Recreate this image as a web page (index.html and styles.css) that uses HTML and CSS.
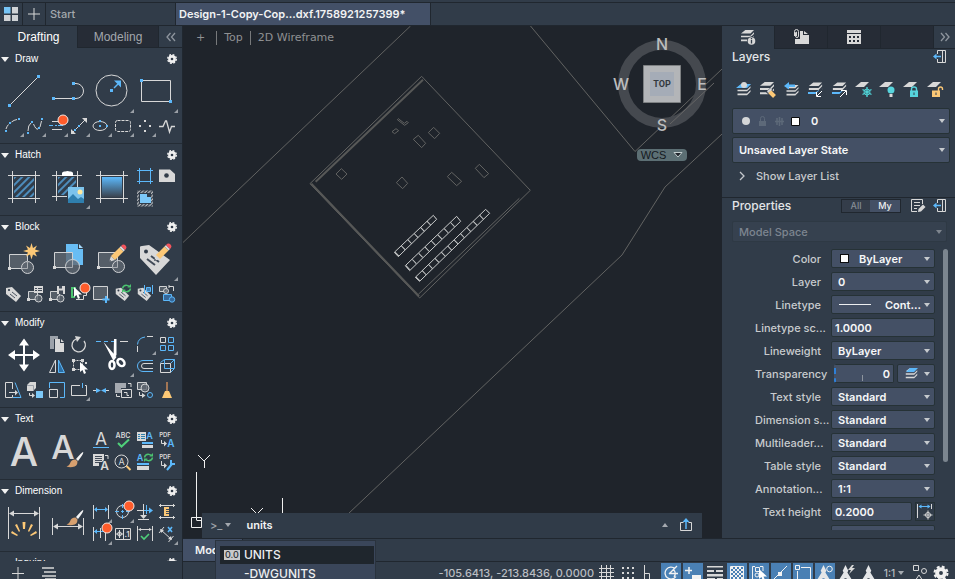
FILE: index.html
```
<!DOCTYPE html>
<html lang="en">
<head>
<meta charset="utf-8">
<title>Design-1-Copy</title>
<link rel="stylesheet" href="styles.css">
</head>
<body>
<svg class="defs" width="0" height="0" aria-hidden="true">
  <defs>
    <linearGradient id="fade" x1="0" y1="0" x2="0" y2="1"><stop offset="0" stop-color="#5cb8fa"/><stop offset="1" stop-color="#3a434f"/></linearGradient>
    <pattern id="hatch" width="5" height="5" patternUnits="userSpaceOnUse" patternTransform="rotate(45)"><path d="M2 0V5" stroke="#5cb8fa" stroke-width="1.3"/></pattern>
    <pattern id="fine" width="2.5" height="2.5" patternUnits="userSpaceOnUse" patternTransform="rotate(45)"><path d="M1 0V3" stroke="#d8d8d8"/></pattern>
    <symbol id="gear" viewBox="0 0 12 12"><circle cx="6" cy="6" r="3.900" fill="#f0f0f0"/><circle cx="6" cy="6" r="4.300" fill="none" stroke="#f0f0f0" stroke-width="1.400" stroke-dasharray="1.900 1.480"/><circle cx="6" cy="6" r="1.300" fill="#313c49"/></symbol>
    <symbol id="pencil" viewBox="0 0 18 18"><path d="M0 18l2-6 4 4z" fill="#d8d8d8"/><path d="M0 18l.8-2.300 1.500 1.500z" fill="#39424f"/><path d="M2 12L10.500 3.500l4 4L6 16z" fill="#fcc876"/><path d="M10.500 3.500l1.500-1.500 4 4-1.500 1.500z" fill="#d8d8d8"/><path d="M12 2q2.500-2.500 4.500-.5T16 6z" fill="#f5555d"/></symbol>
    <symbol id="brush" viewBox="0 0 18 16"><path d="M17 0q1.500 1-5 9l-2-2q6-7 7-7z" fill="#f4f4f4"/><path d="M9.500 7.500l2 2q0 5-5 5.500-3 .5-6-.5 3-1 3.500-3 1-4 5.500-4z" fill="#d7a06f"/></symbol>
    <symbol id="badge" viewBox="0 0 12 12"><circle cx="6" cy="6" r="5" fill="#ff5c2b" stroke="#f5e6e0"/></symbol>
    <symbol id="cursor" viewBox="0 0 9 12"><path d="M1 0v10l2.500-2 1.500 4 2-1-1.500-3.500H9z" fill="#fff"/></symbol>
    <symbol id="tag" viewBox="0 0 18 18"><path d="M2 3l6-1 9 9-5 6-10-8z" fill="#d8d8d8"/><circle cx="5" cy="5" r="1.100" fill="#313c49"/><path d="M6 9l5 4M8 7l5 4" stroke="#4a5461" fill="none"/></symbol>
    <symbol id="refresh" viewBox="0 0 12 10"><path d="M1.500 5q1-4 5-3.500l2.500 1M10.500 5q-1 4-5 3.500l-2.500-1" fill="none" stroke="#4bc26f" stroke-width="1.500"/><path d="M11 0v4H7zM1 10V6h4z" fill="#4bc26f"/></symbol>
    <symbol id="slabs" viewBox="0 0 17 15"><path d="M6 0h10l-4 4H1zM1 6.500h11l4-4v2l-4 4H1zM1 11h11l4-4v2l-4 4H1z" fill="#d8d8d8"/></symbol>
    <symbol id="dock" viewBox="0 0 14 14"><path d="M4.500 4V.5h8v12h-8V9M9.500 1v11" fill="none" stroke="#d8d8d8"/><path d="M8 6.500H2" stroke="#5cb8fa" stroke-width="1.500"/><path d="M0 6.500l3.500-3v6z" fill="#5cb8fa"/></symbol>
    <symbol id="person" viewBox="0 0 16 18"><path d="M8 0l3 6-1 2 5 8q-3 2-5 1l-1-3H7l-1 3q-2 1-5-1l5-8-1-2z" fill="#e4e6e8"/></symbol>
  </defs>
</svg>

<div class="app">
  <div class="titlebar"></div>
  <nav class="docbar" aria-label="Documents">
    <button class="doc-home" aria-label="Home"><svg width="16" height="16"><path fill="#76c5f7" d="M1 1h6.500v6.500H1z"/><path fill="#d0d3d6" d="M9 1h6v6.500H9zM1 9h6.500v6H1zM9 9h6v6H9z"/></svg></button>
    <button class="doc-add" aria-label="New tab"><svg width="12" height="12"><path class="l" d="M6 0v12M0 6h12"/></svg></button>
    <button class="doc-tab start">Start</button>
    <button class="doc-tab current">Design-1-Copy-Cop...dxf.1758921257399*</button>
  </nav>

  <div class="workspace">
    <aside class="tools">
      <div class="tool-tabs">
        <button class="tool-tab on">Drafting</button>
        <button class="tool-tab modeling">Modeling</button>
        <button class="collapse" aria-label="Collapse"><svg width="10" height="8"><path class="dim" d="M4.500 0L1 4l3.500 4M9 0L5.500 4 9 8"/></svg></button>
      </div>
      <div class="sections">
        <section class="group">
          <h2>Draw <button class="opts" aria-label="Draw options"><svg width="12" height="12"><use href="#gear"/></svg></button></h2>
          <div class="grid">
            <button class="big" aria-label="Line"><svg width="44" height="44"><path class="l" d="M7.500 35.500l29-29"/><path class="bf" d="M6 34h3v3H6zM35 5h3v3h-3z"/></svg></button>
            <button class="big" aria-label="Polyline"><svg width="44" height="44"><path class="l" d="M7.500 28.500h20M29 13.500h1a7.500 7.500 0 0 1 0 15h-2"/><path class="bf" d="M6 27h3v3H6zM26 27h3v3h-3zM26 12h3v3h-3z"/></svg></button>
            <button class="big more" aria-label="Circle"><svg width="44" height="44"><circle class="l" cx="21.500" cy="20.500" r="15.500"/><path class="b" stroke-width="1.500" d="M24 18l4-4"/><path class="bf" d="M20 19h3v3h-3zM31 10.500v7l-7-7z"/></svg></button>
            <button class="big more" aria-label="Rectangle"><svg width="44" height="44"><path class="l" d="M7.500 10.500h29v21h-29z"/><path class="bf" d="M6 9h3v3H6zM35 30h3v3h-3z"/></svg></button>
          </div>
          <div class="grid second">
            <button class="more" aria-label="Arc"><svg width="22" height="22"><path class="l" d="M4 13Q5 10 6.500 8.500M9.500 6Q12 4 15 3.500"/><path class="bf" d="M3 14h2v2H3zM7 6h2v2H7zM16 2h2v2h-2z"/></svg></button>
            <button class="more" aria-label="Spline"><svg width="22" height="22"><path class="l" d="M4 15q0-6 3-8M9.500 8Q12 14 14 13M16 11l1.500-6"/><path class="bf" d="M3 16h2v2H3zM7 5h2v2H7zM14 11h2v2h-2zM17 2h2v2h-2z"/></svg></button>
            <button class="more" aria-label="Multiline"><svg width="22" height="22"><path class="l" d="M6 5.500h10M6 13.500h10"/><path class="b" d="M3 9.500h4m2 0h2m1 0h5"/><use href="#badge" x="11" y="-2" width="12" height="12"/></svg></button>
            <button class="more" aria-label="Construction line"><svg width="22" height="22"><path class="l" d="M5 16L17 4"/><path class="lf" d="M3 18v-5l5 5zM19 2v5l-5-5z"/><path class="bf" d="M10 9h2v2h-2zM6 13h2v2H6z"/></svg></button>
            <button class="more" aria-label="Ellipse"><svg width="22" height="22"><ellipse class="l" cx="10" cy="10" rx="7" ry="4.500"/><path class="bf" d="M9 9h2v2H9zM9 4h2v2H9zM16 9h2v2h-2z"/></svg></button>
            <button class="more" aria-label="Revision cloud"><svg width="22" height="22"><rect class="l" x="3.500" y="4.500" width="15" height="11" rx="2" stroke-dasharray="3 1"/></svg></button>
            <button class="more" aria-label="Point"><svg width="22" height="22"><path class="lf" d="M10 4h2v2h-2zM5 9h2v2H5zM15 9h2v2h-2zM10 14h2v2h-2z"/></svg></button>
            <button aria-label="Break line"><svg width="22" height="22"><path class="l" stroke-width="1.300" d="M3 10.500h4l2.500-5.500h1l3 11 2-5.500H19"/></svg></button>
          </div>
        </section>

        <section class="group">
          <h2>Hatch <button class="opts" aria-label="Hatch options"><svg width="12" height="12"><use href="#gear"/></svg></button></h2>
          <div class="grid">
            <button class="big" aria-label="Hatch"><svg width="44" height="44"><path fill="url(#hatch)" d="M12 11h20v20H12z"/><path class="l" d="M10.500 5v32M33.500 5v32M6 9.500h32M6 32.500h32"/></svg></button>
            <button class="big more" aria-label="Image hatch"><svg width="44" height="44"><path fill="url(#hatch)" d="M12 11h18v18H12z"/><path class="l" d="M10.500 5v30M31.500 5v16M6 9.500h30M6 30.500h15"/><path fill="#fff" d="M16 7q0-1 2-1.500h1q2.500-1 5 0h1q2 .5 2 1.500v3H16z"/><path fill="#7cc3ec" d="M22 21h16v16H22z"/><circle cx="34" cy="26" r="2.500" fill="#ffeaa0"/><path fill="#2f7fae" d="M22 33l5-5 5 5 3-2 3 2v4H22z"/></svg></button>
            <button class="big" aria-label="Gradient"><svg width="44" height="44"><path fill="url(#fade)" d="M12 11h20v20H12z"/><path class="l" d="M10.500 5v32M33.500 5v32M6 9.500h32M6 32.500h32"/></svg></button>
            <button aria-label="Boundary"><svg width="22" height="22"><path class="b" d="M5.500 2v16M16.500 2v16M3 4.500h16M3 15.500h16"/></svg></button>
            <button aria-label="Wipeout"><svg width="22" height="22"><path class="lf" d="M3 3.500h11l5 4.500v8H3z"/><circle cx="10.500" cy="9.500" r="2.300" fill="#313c49"/></svg></button>
            <button aria-label="Region"><svg width="22" height="22"><path fill="url(#fine)" d="M3 2.500h16v16H3z"/><path fill="#313c49" d="M5 5h12v11H5z"/><path fill="#7cc8f8" d="M6 6h7v3h4v6H6z"/></svg></button>
          </div>
        </section>

        <section class="group">
          <h2>Block <button class="opts" aria-label="Block options"><svg width="12" height="12"><use href="#gear"/></svg></button></h2>
          <div class="grid">
            <button class="big" aria-label="Create block"><svg width="44" height="44"><path class="box" d="M7.500 16.500h18v14h-18z"/><circle class="box" cx="25.500" cy="29.500" r="6"/><path class="box-line" d="M25.500 23v7.500h-6"/><path class="lf" d="M6 29h3v3H6z"/><path fill="#fcc876" d="M29.500 5l1.500 5 4-2.500-2 4 5 1.500-5 1.500 2 4-4-2-1.500 5-1.500-5-4 2 2-4-5-1.500 5-1.500-2-4 4 2.500z"/></svg></button>
            <button class="big" aria-label="Insert block"><svg width="44" height="44"><path fill="#68bdf4" d="M20 6h12v5h5v16H20z"/><path fill="#a6dafb" d="M33 6l4 4h-4z"/><path class="box" d="M8.500 14.500h18v15h-18z"/><circle class="box" cx="26.500" cy="28.500" r="7"/><path class="box-line" d="M26.500 22v7.500H20"/><path class="lf" d="M7 28h3v3H7z"/></svg></button>
            <button class="big" aria-label="Edit block"><svg width="44" height="44"><path class="box" d="M8.500 14.500h19v15h-19z"/><circle class="box" cx="28.500" cy="28.500" r="6"/><path class="box-line" d="M27.500 23v6.500H22"/><path class="lf" d="M7 28h3v3H7z"/><use href="#pencil" x="19" y="6" width="18" height="18"/></svg></button>
            <button class="big more" aria-label="Edit attributes"><svg width="44" height="44"><path class="lf" d="M6 9q0-1 2-1l7-1 21 15-14 15L6 20z"/><circle cx="12" cy="13.500" r="2" fill="#313c49"/><path stroke="#414a57" fill="none" stroke-width="2" d="M13 21l8 6M17 18l8 6"/><use href="#pencil" x="20" y="5" width="18" height="18"/></svg></button>
          </div>
          <div class="grid second">
            <button aria-label="Define attribute"><svg width="22" height="22"><use href="#tag" x="2" y="1" width="18" height="18"/></svg></button>
            <button aria-label="Block list"><svg width="22" height="22"><path class="box" d="M4.500 7.500h9v8h-9z"/><circle class="box" cx="14.500" cy="14.500" r="3.500"/><path class="lf" d="M10 2h9v7h-9z"/><path stroke="#414a57" d="M11 4.500h2m1 0h4m-7 2h2m1 0h4"/><path class="lf" d="M3 14h3v3H3z"/></svg></button>
            <button aria-label="Write block"><svg width="22" height="22"><path class="box" d="M4.500 7.500h9v8h-9z"/><circle class="box" cx="14.500" cy="14.500" r="3.500"/><path class="lf" d="M11 2h8v8h-8zM3 14h3v3H3z"/><path fill="#414a57" d="M13 2h3v2.500h-3zM13 6.500h4V10h-4z"/></svg></button>
            <button aria-label="Base point"><svg width="22" height="22"><path fill="none" stroke="#4bc26f" stroke-width="2" d="M8 4H4v9h3"/><path class="l" d="M8 15.500h7.500v-4h3v-5"/><use href="#cursor" x="5" y="3" width="9" height="12"/><use href="#badge" x="11" y="-2" width="12" height="12"/></svg></button>
            <button aria-label="Add to block"><svg width="22" height="22"><path class="box" d="M3.500 2.500h14v13h-14z"/><path fill="none" stroke="#5cb8fa" stroke-width="2" d="M16 12v7M12.500 15.500h7"/></svg></button>
            <button aria-label="Sync attributes"><svg width="22" height="22"><use href="#tag" x="2" y="2" width="16" height="16"/><use href="#refresh" x="9" y="0" width="11" height="9"/></svg></button>
            <button aria-label="Attribute manager"><svg width="22" height="22"><use href="#tag" x="2" y="2" width="16" height="16"/><path fill="#3f7fb4" stroke="#5cb8fa" d="M12.500 3.500h4v4h-4z"/><path class="b" d="M10.500 1v9M18.500 1v9"/></svg></button>
            <button aria-label="Replace block"><svg width="22" height="22"><path class="box" d="M3.500 2.500h7v5h-7z"/><circle class="box" cx="10" cy="7" r="2.500"/><path class="l" d="M13 2.500h4.500V7M13 1v3"/><path fill="#36689a" stroke="#5cb8fa" d="M7.500 10.500h8v6h-8z"/><circle cx="16" cy="15.500" r="2.700" fill="#36689a" stroke="#5cb8fa"/></svg></button>
          </div>
        </section>

        <section class="group">
          <h2>Modify <button class="opts" aria-label="Modify options"><svg width="12" height="12"><use href="#gear"/></svg></button></h2>
          <div class="grid modify">
            <button class="big" aria-label="Move"><svg width="44" height="44"><path stroke="#fff" stroke-width="2" d="M22 10v22M11 21h22"/><path fill="#fff" d="M22 4.500l5 7H17zM22 37.500l5-7H17zM6 21l7-5v10zM38 21l-7-5v10z"/></svg></button>
            <button aria-label="Copy"><svg width="22" height="22"><path fill="#9ca2aa" d="M4 2h8v3H8v10H4z"/><path class="lf" d="M9 5h5v4h4v9H9zM15 5l3 3h-3z"/></svg></button>
            <button aria-label="Rotate"><svg width="22" height="22"><path class="l" stroke-width="1.300" d="M8 5a6.700 6.700 0 1 0 8 2"/><path class="lf" d="M7 2l6 1-4 5z"/></svg></button>
            <button class="big more" aria-label="Trim"><svg width="44" height="44"><path class="b" d="M6 7.500h5m3 0h4m3 0h4"/><path class="l" d="M30 7.500h8"/><path fill="#fff" d="M13.500 8l13 15-3 4zM24 5h2.500v16l-3 4z"/><g fill="none" stroke="#fff" stroke-width="2.500"><ellipse cx="22" cy="31" rx="2.500" ry="4"/><ellipse cx="31" cy="28.500" rx="3" ry="4" transform="rotate(-45 31 28.500)"/></g></svg></button>
            <button class="more" aria-label="Fillet"><svg width="22" height="22"><path class="b" d="M3.500 10.500Q4 4 11 3"/><path class="l" d="M3.500 12v6M13 2.500h6"/></svg></button>
            <button class="more" aria-label="Array"><svg width="22" height="22"><path class="l" d="M4.500 3.500h5v5h-5z"/><path class="b" d="M12.500 3.500h5v5h-5zM4.500 11.500h5v5h-5zM12.500 11.500h5v5h-5z"/></svg></button>
            <button aria-label="Mirror"><svg width="22" height="22"><path class="l" d="M9.500 4v12.500h-6z"/><path fill="#2d6ea3" stroke="#5cb8fa" d="M12.500 4v12.500h6z"/></svg></button>
            <button aria-label="Select"><svg width="22" height="22"><path class="l" stroke-dasharray="2 1" d="M5.500 4.500h9v9h-9z"/><path class="lf" d="M4 3h3v3H4zM13 3h3v3h-3zM4 12h3v3H4zM17 6h2v2h-2z"/><use href="#cursor" x="11" y="6" width="9" height="12"/></svg></button>
            <button aria-label="Offset"><svg width="22" height="22"><path class="b" d="M19 4.500H9a5.500 5.500 0 0 0 0 11h10"/><path class="l" d="M19 7.500h-9a2.500 2.500 0 0 0 0 5h9"/></svg></button>
            <button aria-label="Box edges"><svg width="22" height="22"><path class="b" d="M4.500 6.500l4-3h10l-4 4M18.500 3.500v9l-4 4"/><path class="l" d="M4.500 7.500h10v9h-10z"/><path class="b" d="M8.500 4v8.500H18"/></svg></button>
          </div>
          <div class="grid second">
            <button aria-label="Stretch"><svg width="22" height="22"><path class="l" d="M10.500 9V2.500h-7v15h7V15"/><path class="b" d="M13 2.500l6 15h-8"/><path class="l" d="M7 12.500h7"/><path class="lf" d="M13 10l3 2.500-3 3z"/></svg></button>
            <button aria-label="Copy solid"><svg width="22" height="22"><path class="lf" d="M3 5l3-3h6v6l-3 3H3z"/><path stroke="#9ca2aa" fill="none" d="M3 5.500h6.500V11"/><path fill="#7cc8f8" d="M12 11h7v7h-7z"/><path class="l" d="M5.500 13v2.500H9"/><path class="lf" d="M8 13l3 2.500L8 18z"/></svg></button>
            <button aria-label="Scale"><svg width="22" height="22"><path class="b" d="M3.500 8V2.500h15v15H14"/><path class="l" d="M3.500 9.500h8v8h-8z"/></svg></button>
            <button class="more" aria-label="Break"><svg width="22" height="22"><path class="l" d="M12 5.500H3.500v10h15v-10H17"/><path class="b" d="M14.500 3v5"/></svg></button>
            <button aria-label="Join"><svg width="22" height="22"><path class="l" d="M3 10.500h5M14 10.500h5"/><path class="bf" d="M6 8l5 2.500L6 13zM16 8l-5 2.500 5 2.500z"/></svg></button>
            <button aria-label="Draw order"><svg width="22" height="22"><path fill="#a4a9b0" d="M3 3h11v5H9v5H3z"/><path class="l" d="M9.500 9.500h10v8h-10zM12 12.500h3v3h2M16 3.500h3V7M4.500 14v2.500H8"/></svg></button>
            <button aria-label="Convert to block"><svg width="22" height="22"><path class="box" d="M3.500 2.500h9v7h-9z"/><circle class="box" cx="11" cy="8" r="4"/><circle class="b" cx="16" cy="15" r="2.500"/><path class="l" d="M5.500 12v3.500H9"/><path class="lf" d="M8 13l3.500 2.500L8 18z"/></svg></button>
            <button aria-label="Purge"><svg width="22" height="22"><path stroke="#e0955c" stroke-width="1.300" d="M11 2v10"/><path fill="#fcc876" d="M9 11h4l3 7H6z"/></svg></button>
          </div>
        </section>

        <section class="group">
          <h2>Text <button class="opts" aria-label="Text options"><svg width="12" height="12"><use href="#gear"/></svg></button></h2>
          <div class="grid">
            <button class="big" aria-label="Multiline text"><svg width="44" height="44"><text class="glyph medium" x="22" y="36" font-size="40">A</text></svg></button>
            <button class="big" aria-label="Text style"><svg width="44" height="44"><text class="glyph medium" x="17" y="29" font-size="33">A</text><use href="#brush" x="20" y="22" width="18" height="16"/></svg></button>
            <button aria-label="Single line text"><svg width="22" height="22"><text class="glyph thin" x="11" y="15" font-size="17">A</text><path class="b" d="M3 17.500h16"/></svg></button>
            <button aria-label="Spell check"><svg width="22" height="22"><text class="glyph" x="11" y="8" font-size="7">ABC</text><path fill="none" stroke="#4fd07a" stroke-width="2" d="M6 13l3.500 3.500L17 9.500"/></svg></button>
            <button aria-label="Field"><svg width="22" height="22"><path class="lf" d="M3 2h9v9H3z"/><path stroke="#2f7fae" d="M4 4.500h2m1 0h4M4 6.500h2m1 0h4M4 8.500h2m1 0h4"/><text class="glyph blue" x="15.500" y="9" font-size="9">A</text><path class="bf" d="M8 12h11v2H8z"/><path class="lf" d="M8 15h11v3H8z"/></svg></button>
            <button aria-label="PDF text"><svg width="22" height="22"><text class="glyph" x="9" y="7" font-size="6">PDF</text><path class="l" d="M5.500 10v3.500H9"/><path class="lf" d="M8 11l3 2.500-3 3z"/><text class="glyph blue" x="15" y="17" font-size="10">A</text></svg></button>
            <button aria-label="Text align"><svg width="22" height="22"><path class="lf" d="M3 2h11v12H3z"/><path stroke="#414a57" d="M5 4.500h7M5 6.500h7M5 8.500h7M5 10.500h4"/><path class="l" d="M15 3.500h3V7"/><path fill="#313c49" d="M9 10h3l2-2 5 10H9z"/><text class="glyph" x="14.500" y="18" font-size="12">A</text></svg></button>
            <button aria-label="Find text"><svg width="22" height="22"><circle class="l" cx="9.500" cy="9.500" r="6.500"/><text class="glyph thin" x="9.500" y="13" font-size="9">A</text><path stroke="#fcc876" stroke-width="2" d="M14.500 14l4 4"/></svg></button>
            <button aria-label="Update text"><svg width="22" height="22"><text class="glyph blue" x="6" y="9" font-size="9">A</text><use href="#refresh" x="9" y="1" width="11" height="9"/><path class="bf" d="M3 11h12v2H3z"/><path class="lf" d="M3 14h12v4H3z"/></svg></button>
            <button aria-label="PDF settings"><svg width="22" height="22"><text class="glyph" x="9" y="7" font-size="6">PDF</text><path class="l" d="M5.500 9v4.500H9"/><path class="lf" d="M8 11l3 2.500-3 3z"/><path fill="none" stroke="#5cb8fa" stroke-width="2" d="M11 18l5-6M15 8v4h4"/></svg></button>
          </div>
        </section>

        <section class="group">
          <h2>Dimension <button class="opts" aria-label="Dimension options"><svg width="12" height="12"><use href="#gear"/></svg></button></h2>
          <div class="grid">
            <button class="big" aria-label="Dimension"><svg width="44" height="44"><path class="l" d="M6.500 5v32M37.500 5v32M8 11.500h28"/><path class="lf" d="M7 11.500l5-3v6zM37 11.500l-5-3v6z"/><path fill="#fcc876" d="M20.500 20h3l-.5 7h-2zM13 23l2-1 3 7-1 1zM31 23l-2-1-3 7 1 1zM9 31l1-2 6 4-1 1zM35 31l-1-2-6 4 1 1z"/></svg></button>
            <button class="big" aria-label="Dimension style"><svg width="44" height="44"><path class="l" d="M6.500 16v17M37.500 16v17M8 24.500h28"/><path class="lf" d="M7 24.500l5-3v6zM37 24.500l-5-3v6z"/><use href="#brush" x="20" y="8" width="18" height="16"/></svg></button>
            <button class="more" aria-label="Linear"><svg width="22" height="22"><path class="l" d="M3.500 3v14M18.500 3v14"/><path class="b" d="M5 7.500h12"/><path class="bf" d="M4 7.500L7 5v5zM18 7.500L15 5v5z"/></svg></button>
            <button class="more" aria-label="Center mark"><svg width="22" height="22"><circle class="l" cx="10.500" cy="9.500" r="6"/><path class="b" d="M10.500 2v4m0 2v3m0 2v4M3 9.500h4m2 0h3m2 0h4"/><use href="#badge" x="11" y="-2" width="12" height="12"/></svg></button>
            <button aria-label="Ordinate"><svg width="22" height="22"><path class="l" d="M3 8.500h7M9.500 2v12"/><path class="b" d="M12.500 3v9M10 8.500h6"/><path class="bf" d="M19 8.500l-4-3v6z"/><path class="lf" d="M9.500 17l-3.500-4h7z"/><path class="l" d="M4 17.500h11"/></svg></button>
            <button aria-label="Dimension space"><svg width="22" height="22"><path class="l" d="M3 3.500h16M3 15.500h16M4.500 2v3M17.500 2v3M4.500 14v3M17.500 14v3"/><path fill="#fcc876" d="M8 5h5v9H8z"/><path stroke="#414a57" d="M10 7.500h3M10 9.500h3M10 11.500h3"/></svg></button>
            <button class="more" aria-label="Continue"><svg width="22" height="22"><path class="l" d="M3.500 3v14M10.500 4v10M15.500 4v13"/><path class="b" d="M4 7.500h6M11 7.500h4"/><path class="bf" d="M4 7.500L7 5v5z"/><use href="#badge" x="11" y="-2" width="12" height="12"/></svg></button>
            <button aria-label="Tolerance"><svg width="22" height="22"><path class="l" d="M3.500 4.500h15v11h-15zM11.500 4v12"/><circle class="l" cx="7.500" cy="10" r="2"/><path class="l" d="M7.500 6v8M4 10h7"/><text class="glyph" x="15" y="13" font-size="8">.1</text></svg></button>
            <button aria-label="Inspect"><svg width="22" height="22"><path class="l" d="M3.500 2v15M18.500 2v15M5 5.500h12"/><path class="lf" d="M4 5.500L7 4v3zM18 5.500L15 4v3z"/><path fill="none" stroke="#4fd07a" stroke-width="1.600" d="M7 12l3 3 5-5"/></svg></button>
            <button class="more" aria-label="Jog"><svg width="22" height="22"><path class="l" d="M5 6l10 9M3 9l5-6M12.500 18l5-6"/><path class="lf" d="M4 5l4 1-3 3zM16 16l-4-1 3-3z"/><path fill="none" stroke="#5cb8fa" stroke-width="1.600" d="M12 3l4 5M16 3l-4 5"/></svg></button>
          </div>
        </section>

        <section class="group">
          <h2>Inquiry <button class="opts" aria-label="Inquiry options"><svg width="12" height="12"><use href="#gear"/></svg></button></h2>
        </section>
      </div>
      <footer class="tools-foot">
        <button aria-label="Add group"><svg width="12" height="14"><path class="l" d="M6 1v12M0 7.500h12"/></svg></button>
        <button aria-label="Manage groups"><svg width="16" height="14"><path class="l" stroke-width="1.500" d="M1 2h12M3 6h12M1 10h14M4 13h11"/></svg></button>
      </footer>
    </aside>

    <div class="center">
      <div class="stage">
        <main class="canvas">
          <svg class="drawing" width="100%" height="100%" aria-label="Site plan drawing">
            <g class="plan" transform="translate(-183 -26)">
              <path d="M410.500 26L183 242.500M530.500 26l104.500 125.500L722 69M722 134l-57 53-43 68L348 514"/>
            </g>
            <g class="plan" transform="translate(107 34) scale(.3333)">
              <path d="M395 49L721 391 389 714 60 371zM385 703L688 415"/>
              <path class="wall" d="M399 59L77 365M64 371l323 338"/>
              <path d="M154 326l17 16-16 16-17-16zM336 351l17 19-15 16-19-18zM485 337l30 27-15 13-28-27zM568 313l28 28-14 12-26-28zM431 202l18 18-15 16-19-18zM385 226l22 24-12 13-25-25zM318 206l8 6-12 9-8-6zM325 176l18 14 8-6 4 4-11 8-22-17z"/>
              <path class="stalls" d="M430 466l10 12-115 112-12-13zM500 469l12 15-153 148-13-15zM587 448l12 12-210 204-13-12z"/>
            </g>
            <g class="rungs" transform="translate(107 34) scale(.3333)">
              <path d="M435 472L319 584M506 476L352 625M593 454L382 658"/>
            </g>
          </svg>
          <div class="view-label">
            <button aria-label="Viewport controls">+</button><span class="bar"></span><button>Top</button><span class="bar"></span><button>2D Wireframe</button>
          </div>
          <div class="viewcube">
            <svg width="104" height="108" aria-label="View cube">
              <circle cx="52" cy="52" r="39" fill="none" stroke="#45494f" stroke-width="10"/>
              <path fill="#b3b5b8" stroke="#7e8183" d="M33.500 33.500h37v37h-37z"/><path fill="#a5acb7" d="M40 40h24v24H40z"/>
              <text x="52" y="55" class="face">TOP</text>
              <text x="52" y="18">N</text><text x="92" y="58">E</text><text x="52" y="99">S</text><text x="11" y="58">W</text>
              <path stroke="#666" d="M60 92l44-41"/>
            </svg>
            <button class="wcs">WCS <svg width="10" height="6"><path fill="#1f242b" stroke="#c4cfd0" d="M1 .5h8l-4 4.500z"/></svg></button>
          </div>
          <svg class="ucs" width="110" height="90" aria-label="UCS icon"><path d="M13.500 24v48M8.500 69.500h10v10h-10zM13.500 72.500h12M15 7l6 6 6-6M21.500 13v7M68 60l6 6 6-6M99.500 50v20"/></svg>
          <form class="command">
            <span class="prompt">&gt;_</span><span class="tri"></span>
            <input type="text" aria-label="Command" value="units">
            <span class="tri up"></span>
            <button type="button" aria-label="Share"><svg width="12" height="14"><path class="l" d="M3.500 4.500h-3v8h11v-8h-3"/><path class="b" stroke-width="1.500" d="M6 11V3"/><path class="bf" d="M6 0l3.500 4h-7z"/></svg></button>
          </form>
        </main>

        <aside class="side">
          <div class="side-tabs">
            <button class="on" aria-label="Layers"><svg width="18" height="16"><use href="#slabs" x="1" y="0" width="15" height="13"/><circle cx="12.500" cy="11" r="4.500" fill="#313c49"/><circle cx="12.500" cy="11" r="3.800" fill="#d8d8d8"/><path stroke="#313c49" stroke-width="1.300" d="M12.500 8v1.300M12.500 10v3.500"/></svg></button>
            <button aria-label="References"><svg width="18" height="16"><path class="lf" d="M8 2h3v4h6v9H3v-5h5zM12 2l4 3h-4z"/><path stroke="#d8d8d8" fill="none" d="M2.500 7V2.500q0-2 2-2t2 2V7q0 1.500-1.500 1.500T3.500 7V4q0-1 1-1v4"/></svg></button>
            <button aria-label="Calendar"><svg width="16" height="14"><path class="lf" d="M1 0h14v3H1zM1 4h14v10H1z"/><path fill="#262c36" d="M3 6h2v2H3zM7 6h2v2H7zM11 6h2v2h-2zM3 10h2v2H3zM7 10h2v2H7zM11 10h2v2h-2z"/></svg></button>
            <span class="gap"></span>
            <button class="expand" aria-label="Expand"><svg width="10" height="8"><path class="dim" d="M1 0l3.500 4L1 8M5.500 0L9 4 5.500 8"/></svg></button>
          </div>

          <section class="layers">
            <header><h2>Layers</h2><button aria-label="Dock layers"><svg width="14" height="14"><use href="#dock"/></svg></button></header>
            <div class="layer-tools">
              <button aria-label="Isolate"><svg width="24" height="24"><use href="#slabs" x="4" y="6" width="16" height="13"/><path fill="#5cb8fa" d="M9 6h10l-4 4H4z"/><circle cx="12" cy="7" r="3" fill="#d8d8d8"/></svg></button>
              <button aria-label="Match"><svg width="24" height="24"><use href="#slabs" x="3" y="4" width="16" height="14"/><path stroke="#313c49" stroke-width="6" d="M12 12l6 6"/><path stroke="#fcc876" stroke-width="4" d="M13.500 13.500l5 5"/><path class="lf" d="M11 13l4-3 1 2-4 3z"/></svg></button>
              <button aria-label="Previous"><svg width="24" height="24"><use href="#slabs" x="5" y="7" width="15" height="12"/><path fill="#5cb8fa" d="M4 8l5-4v2.500h6V9H9v2.500z"/></svg></button>
              <button aria-label="Make current down"><svg width="24" height="24"><use href="#slabs" x="4" y="4" width="15" height="14"/><path fill="#5cb8fa" d="M4 14h8l3-2v2l-3 2H4z"/><path stroke="#313c49" stroke-width="5" d="M19 12l-6 6"/><path stroke="#fff" fill="none" d="M18 13l-5 5M12.500 14v4.500H17"/></svg></button>
              <button aria-label="Make current up"><svg width="24" height="24"><use href="#slabs" x="4" y="4" width="15" height="14"/><path fill="#5cb8fa" d="M4 14h8l3-2v2l-3 2H4z"/><path stroke="#313c49" stroke-width="5" d="M19 12l-6 6"/><path stroke="#fff" fill="none" d="M12 19l6-6M13 12.500h5.500V17"/></svg></button>
              <button aria-label="Freeze"><svg width="24" height="24"><path class="lf" d="M9 4h8l-5 5H3z"/><path fill="none" stroke="#4fd0d4" stroke-width="1.400" d="M15 9v10M10.500 11.500l9 5M10.500 16.500l9-5"/><circle cx="15" cy="14" r="3" fill="none" stroke="#4fd0d4"/></svg></button>
              <button aria-label="Turn off"><svg width="24" height="24"><path class="lf" d="M9 4h8l-5 5H3z"/><circle cx="15" cy="12" r="3.500" fill="#56d4dc"/><path class="lf" d="M13.500 16h3v3h-3z"/></svg></button>
              <button aria-label="Lock"><svg width="24" height="24"><path class="lf" d="M9 4h8l-5 5H3z"/><path fill="none" stroke="#56d4dc" stroke-width="1.400" d="M11.500 13v-2q0-2 2.500-2t2.500 2v2"/><path fill="#56d4dc" d="M10 12.500h8V19h-8z"/><path stroke="#313c49" d="M14 14.500v2.500"/></svg></button>
              <button aria-label="Unlock"><svg width="24" height="24"><path class="lf" d="M9 4h8l-5 5H3z"/><path fill="none" stroke="#fcc876" stroke-width="1.400" d="M14.500 13v-2q0-2 2-2t2 2v1"/><path fill="#fcc876" d="M8 12.500h8V19H8z"/><path stroke="#313c49" d="M12 14.500v2.500"/></svg></button>
            </div>
            <label class="field tall layer-field">
              <svg width="63" height="14"><circle cx="4" cy="7" r="4" fill="#d4d6d8"/><path fill="#5d6979" d="M17 7h7v5h-7z"/><path fill="none" stroke="#5d6979" d="M18.500 7V4.500q0-2 2-2t2 2V7"/><path stroke="#5d6979" stroke-width="1.500" d="M37.500 3v9M35 4v7M40 4v7M33 7.500h9"/><path fill="#fff" stroke="#0c0d0f" d="M49.500 3.500h8v8h-8z"/></svg>
              <select aria-label="Current layer"><option>0</option></select>
            </label>
            <label class="field tall"><select aria-label="Layer state"><option>Unsaved Layer State</option></select></label>
            <button class="show-list"><svg width="6" height="8"><path stroke="#c4c8cc" stroke-width="1.300" fill="none" d="M1 0l4 4-4 4"/></svg>Show Layer List</button>
          </section>

          <section class="props">
            <header><h2>Properties</h2>
              <div class="switch"><button>All</button><button class="on">My</button></div>
              <button aria-label="Edit properties"><svg width="16" height="14"><path class="l" d="M12.500 5V.500h-11v12H7M4 3.500h6M4 6.500h6M4 9.500h3"/><path class="lf" d="M8 13l.5-3L13 5.500l2.500 2.500-4.500 4.500z"/></svg></button>
              <button aria-label="Dock properties"><svg width="14" height="14"><use href="#dock"/></svg></button>
            </header>
            <label class="field space"><select aria-label="Selection" disabled><option>Model Space</option></select></label>
            <div class="scroll">
              <div class="rows">
                <label for="p1">Color</label><div class="field"><i class="swatch"></i><select id="p1"><option>ByLayer</option></select></div>
                <label for="p2">Layer</label><div class="field"><select id="p2"><option>0</option></select></div>
                <label for="p3">Linetype</label><div class="field"><i class="stroke"></i><select id="p3"><option>Cont...</option></select></div>
                <label for="p4">Linetype sc...</label><div class="field text"><input id="p4" type="text" value="1.0000"></div>
                <label for="p5">Lineweight</label><div class="field"><select id="p5"><option>ByLayer</option></select></div>
                <label for="p6">Transparency</label><div class="pair"><div class="field text range"><input id="p6" type="text" value="0"></div><button class="field by" aria-label="Transparency source"><svg width="13" height="12"><use href="#slabs" width="13" height="12"/><path fill="#5cb8fa" d="M5 0h8L9 4H1z"/></svg></button></div>
                <label for="p7">Text style</label><div class="field"><select id="p7"><option>Standard</option></select></div>
                <label for="p8">Dimension s...</label><div class="field"><select id="p8"><option>Standard</option></select></div>
                <label for="p9">Multileader...</label><div class="field"><select id="p9"><option>Standard</option></select></div>
                <label for="p10">Table style</label><div class="field"><select id="p10"><option>Standard</option></select></div>
                <label for="p11">Annotation...</label><div class="field"><select id="p11"><option>1:1</option></select></div>
                <label for="p12">Text height</label><div class="pair"><div class="field text"><input id="p12" type="text" value="0.2000"></div><button class="pick" aria-label="Pick height"><svg width="18" height="18"><path class="l" d="M1.500 1v14M15.500 1v5"/><path class="b" d="M3 3.500h11"/><path class="bf" d="M2.500 3.500l3-2v4zM14.500 3.500l-3-2v4z"/><circle class="l" cx="12" cy="12" r="2.500"/><path class="l" d="M12 7.500v9M7.500 12h9"/></svg></button></div>
                <span></span><div class="field"></div>
              </div>
              <div class="thumb"></div>
            </div>
          </section>
        </aside>
      </div>

      <nav class="layouts" aria-label="Layouts"><button class="on">Model</button></nav>
      <footer class="status">
        <span class="coords">-105.6413, -213.8436, 0.0000</span>
        <button aria-label="Grid"><svg width="20" height="20"><path class="l" d="M5.500 2v15M10.500 2v15M14.500 2v15M3 5.500h15M3 9.500h15M3 13.500h15"/></svg></button>
        <button aria-label="Snap"><svg width="20" height="20"><path fill="none" stroke="#d8d8d8" stroke-width="2" stroke-dasharray="2 3" d="M4 5h13M4 10h13M4 15h13"/></svg></button>
        <button class="slim" aria-label="Ortho"><svg width="12" height="20"><path class="l" d="M3.500 2v16M3.500 10.500h5V18"/></svg></button>
        <button class="on" aria-label="Polar tracking"><svg width="20" height="20"><path stroke="#f2f2f2" stroke-width="1.300" fill="none" d="M14 5.500A6 6 0 1 0 15 13.500M8 10.500h9M8 11l8-8M12 6q4 4 1 8"/></svg></button>
        <button class="on" aria-label="Dynamic input"><svg width="20" height="20"><path stroke="#f2f2f2" stroke-width="1.500" d="M6 4v7M2 7.500h7"/><path fill="#f2f2f2" d="M9 12h9v6H9z"/></svg></button>
        <button aria-label="Lineweight"><svg width="20" height="20"><path fill="#d8d8d8" d="M2 3h16v1.500H2zM2 7h7v2H2zM11 7h7v2h-7zM2 11h16v2.500H2zM2 15h8v3H2zM12 15h6v3h-6z"/></svg></button>
        <button class="on" aria-label="Transparency"><svg width="20" height="20"><path stroke="#f2f2f2" fill="none" d="M3.500 3.500h13v13h-13z"/><path stroke="#f2f2f2" stroke-width="2" stroke-dasharray="2 2" d="M4 5h12M6 7h10M4 9h12M6 11h10M4 13h12M6 15h10"/></svg></button>
        <button class="on" aria-label="Selection cycling"><svg width="20" height="20"><path stroke="#f2f2f2" fill="none" d="M6 3.500H3.500v13H6M11 3.500h3V8M6.500 4.500h4v4h-4z"/><circle cx="8" cy="12" r="2" stroke="#f2f2f2" fill="none"/><use href="#cursor" x="9" y="6" width="9" height="12"/></svg></button>
        <button class="on" aria-label="Object tracking"><svg width="20" height="20"><path stroke="#f2f2f2" fill="none" d="M3 16L16 3M3 16.500h15"/><path fill="#f2f2f2" d="M7 9h4v4H7z"/></svg></button>
        <button class="on" aria-label="Object snap"><svg width="20" height="20"><path stroke="#f2f2f2" fill="none" d="M2.500 2.500h4v4h-4zM8 4.500h9.500V18M4.500 8v10"/></svg></button>
        <button class="on" aria-label="Annotation visibility"><svg width="20" height="20"><use href="#person" x="1" y="2" width="15" height="17"/><circle cx="14.500" cy="6" r="2.800" fill="#4a80b4" stroke="#f2f2f2"/></svg></button>
        <button aria-label="Auto scale"><svg width="20" height="20"><use href="#person" x="1" y="2" width="15" height="17"/><path class="lf" d="M15 2l-4 5h3l-2 4 6-6h-3l2-3z"/></svg></button>
        <button aria-label="Annotation scale"><svg width="20" height="20"><use href="#person" x="2" y="2" width="15" height="17"/></svg></button>
        <button class="scale">1:1 <span class="tri"></span></button>
        <button aria-label="Isolate objects"><svg width="20" height="20"><path class="l" d="M4.500 2.500h5v5h-5zM6 18l4-6 4 6z"/><circle class="l" cx="15" cy="8" r="2.500"/></svg></button>
        <button aria-label="Settings"><svg width="20" height="20"><use href="#gear" x="1" y="1" width="18" height="18"/></svg></button>
      </footer>
    </div>
  </div>

  <ul class="suggest">
    <li class="on"><span class="chip">0.0</span>UNITS</li>
    <li>-DWGUNITS</li>
  </ul>
</div>
</body>
</html>
```

FILE: styles.css
```
:root {
  --panel: #313c49;
  --line: #20272f;
  --field: #445065;
  --edge: #263236;
  --text: #d5d7da;
  --blue: #5cb8fa;
}

* { box-sizing: border-box; }

body {
  margin: 0;
  overflow: hidden;
  background: var(--panel);
  color: var(--text);
  font: 500 11px/16px Inter, "Liberation Sans", sans-serif;
}

button, input, select { font: inherit; color: inherit; }

button {
  display: flex;
  align-items: center;
  justify-content: center;
  padding: 0;
  border: 0;
  background: none;
  position: relative;
}

svg { display: block; flex: none; overflow: visible; }
h2 { margin: 0; font: inherit; }
.defs { position: absolute; }

.l { fill: none; stroke: #d8d8d8; }
.b { fill: none; stroke: var(--blue); }
.lf { fill: #d8d8d8; }
.bf { fill: var(--blue); }
.dim { fill: none; stroke: #8e959e; stroke-width: 1.3; }
.box { fill: #5f6670; fill-opacity: .8; stroke: #d0d2d4; }
.box-line { fill: none; stroke: #a9adb2; }
.glyph { fill: #d8d8d8; text-anchor: middle; font-family: Inter, sans-serif; font-weight: 600; }
.glyph.medium { font-weight: 500; }
.glyph.thin { font-weight: 400; }
.blue { fill: var(--blue); }

.app { display: flex; flex-direction: column; height: 100vh; position: relative; }
.titlebar { height: 3px; border-bottom: 1px solid var(--line); flex: none; }

.docbar { display: flex; height: 23px; flex: none; border-bottom: 1px solid var(--line); }
.docbar button { border-right: 1px solid var(--line); }
.doc-home { width: 23px; }
.doc-add { width: 23px; }
.doc-tab { font-weight: 600; }
.docbar .start { width: 130px; justify-content: flex-start; padding-left: 4px; color: #a3a8ae; font-weight: 500; }
.docbar .current { width: 255px; justify-content: flex-start; padding-left: 3px; background: #435067; color: #f2f3f4; }

.workspace { display: flex; flex: 1; min-height: 0; }

.tools { width: 183px; flex: none; display: flex; flex-direction: column; border-right: 1px solid var(--line); }
.tool-tabs { display: flex; height: 22px; flex: none; font: 12px/22px "Liberation Sans", sans-serif; }
.tool-tab { width: 77px; color: #fff; }
.tool-tab.modeling { width: 82px; color: #a3a7ad; background: #262c36; border: 1px solid var(--line); border-top: 0; }
.collapse { flex: 1; border-bottom: 1px solid var(--line); }

.sections { flex: 1; min-height: 0; overflow: hidden; }
.group { padding: 0 4px 5px 2px; position: relative; border-bottom: 1px solid #242c35; }
.group h2 { display: flex; align-items: center; height: 22px; padding-left: 13px; color: #fff; font: 10px/16px "Liberation Sans", sans-serif; }
.group h2::before { content: ""; position: absolute; left: 1px; border: 4px solid transparent; border-top: 5px solid #f2f2f2; border-bottom: 0; }
.opts { margin-left: auto; }
.grid { display: grid; grid-template-columns: repeat(8, 22px); grid-auto-rows: 22px; }
.grid.second { margin-top: 2px; }
.grid .big { grid-column: span 2; grid-row: span 2; }
.modify .big:nth-child(1) { grid-area: 1 / 1 / 3 / 3; }
.modify .big:nth-child(4) { grid-area: 1 / 5 / 3 / 7; }
.more::after { content: ""; position: absolute; right: 0; bottom: 1px; border: 2px solid #9a9fa6; border-top-color: transparent; border-left-color: transparent; }
.tools-foot { display: flex; gap: 17px; height: 18px; flex: none; padding: 5px 0 0 12px; align-items: flex-start; }

.center { flex: 1; min-width: 0; display: flex; flex-direction: column; }
.stage { flex: 1; min-height: 0; display: flex; }
.canvas { flex: 1; min-width: 0; position: relative; overflow: hidden; background: #1f242b; }
.drawing { position: absolute; inset: 0; }
.plan { fill: none; stroke: #626362; }
.plan path { vector-effect: non-scaling-stroke; }
.plan .wall { stroke-width: 2; stroke: #575857; }
.plan .stalls { stroke: #c8caca; }
.rungs { fill: none; stroke: #c8caca; stroke-width: 17; stroke-dasharray: 3 23.6; stroke-dashoffset: -24; }
.view-label { position: absolute; left: 13px; top: 4px; display: flex; gap: 7px; align-items: center; color: #8f9193; font: 11px/16px "DejaVu Sans", sans-serif; }
.bar { width: 1px; height: 14px; background: #77797b; }
.view-label button:first-child { margin-right: 4px; }
.viewcube { position: absolute; right: 8px; top: 6px; width: 104px; }
.viewcube text { fill: #bcbdbe; text-anchor: middle; font: 500 16px Inter, sans-serif; }
.viewcube .face { fill: #33383f; font: bold 9px Roboto, sans-serif; }
.wcs { position: absolute; left: 27px; top: 117px; width: 50px; height: 12px; gap: 7px; border-radius: 4px; background: #5c6f74; color: #14191e; font: 11px/12px "Liberation Sans", sans-serif; }
.ucs { position: absolute; left: 0; bottom: 0; fill: none; stroke: #f0f0f0; }

.command { position: absolute; left: 19px; right: 20px; bottom: 0; height: 25px; display: flex; align-items: center; gap: 3px; padding: 0 10px 2px 8px; background: #303b48; }
.prompt { color: #9ca1a8; line-height: 12px; }
.command input { flex: 1; min-width: 0; margin-left: 12px; padding: 0; border: 0; background: none; color: #f2f3f4; font-weight: 600; }
.tri { width: 0; height: 0; border: 3px solid transparent; border-top: 4px solid #a4a9af; border-bottom: 0; }
.tri.up { border: 3px solid transparent; border-bottom: 4px solid #a4a9af; border-top: 0; margin-right: 9px; }

.side { width: 233px; flex: none; display: flex; flex-direction: column; background: var(--panel); }
.side-tabs { display: flex; height: 23px; flex: none; }
.side-tabs > * { width: 53px; height: 23px; background: #262c36; border: solid var(--line); border-width: 0 1px 1px 0; }
.side-tabs .on { width: 53px; background: none; border-bottom: 0; }
.side-tabs .gap { flex: 1; width: auto; }
.side-tabs .expand { width: 21px; background: none; border-right: 0; }
.side header { display: flex; align-items: center; height: 16px; padding-right: 8px; gap: 7px; }
.side h2 { flex: 1; color: #e3e5e7; font-size: 12px; }
.layers { padding: 0 0 12px 10px; border-bottom: 1px solid var(--line); }
.layer-tools { display: flex; margin: 13px 0 6px; }
.field { display: flex; align-items: center; min-width: 0; height: 19px; position: relative; background: var(--field); border: 1px solid var(--edge); border-radius: 2px; color: #f6f7f8; font-weight: 600; }
.field:has(select)::after, .by::after { content: ""; position: absolute; right: 4px; border: 3px solid transparent; border-top: 4px solid #c6cace; border-bottom: 0; pointer-events: none; }
.field select, .field input { flex: 1; width: 100%; min-width: 0; padding: 0 0 0 6px; border: 0; background: none; appearance: none; opacity: 1; }
.field.text input { padding-left: 3px; }
.tall { height: 26px; margin: 0 5px 3px 0; }
.layer-field { padding-left: 9px; }
.show-list { height: 19px; gap: 11px; margin-left: 7px; color: #c8cbce; }
.props { flex: 1; min-height: 0; display: flex; flex-direction: column; padding-left: 10px; }
.side .props header { height: 15px; }
.switch { display: flex; font-size: 9px; line-height: 12px; margin-right: 2px; border: 1px solid var(--line); }
.switch button { width: 28px; color: #868d96; background: #343d4a; }
.switch .on { width: 30px; color: #eceef0; background: #445065; }
.space { height: 21px; margin: 8px 8px 7px 0; background: #36414f; border-color: #2e3944; color: #7d8590; font-weight: 500; }
.space::after { opacity: .5; }
.scroll { flex: 1; min-height: 0; overflow: hidden; display: flex; margin-bottom: 8px; }
.rows { flex: 1; display: grid; grid-template-columns: 66px 1fr; grid-auto-rows: 19px; gap: 4px 10px; align-items: center; align-content: start; padding-left: 23px; }
.rows label { text-align: right; white-space: nowrap; color: #c8cbce; }
.thumb { width: 5px; height: 213px; margin: 0 7px 0 8px; border-radius: 3px; background: #7b858f; }
.swatch { width: 9px; height: 9px; margin: 0 4px 0 8px; background: #fff; border: 1px solid #0c0d0f; }
.stroke { width: 32px; height: 1px; margin: 0 8px 0 7px; background: #eceef0; }
.pair { display: flex; gap: 3px; min-width: 0; }
.pair .text { flex: 1; }
.range { border-left: 2px dashed #2e7fd6; margin-left: 3px; }
.range input { text-align: right; padding-right: 3px; }
.range::before { content: ""; position: absolute; left: 26px; bottom: 1px; width: 1px; height: 6px; background: #8d949d; }
.field.by { width: 38px; justify-content: flex-start; padding-left: 7px; }
.pick { width: 20px; height: 19px; border: 1px solid var(--edge); }

.layouts { height: 24px; flex: none; display: flex; border: solid var(--line); border-width: 1px 0; }
.layouts .on { width: 60px; justify-content: flex-start; padding-left: 12px; background: #435067; color: #f2f3f4; font-weight: 600; border-right: 1px solid var(--line); }
.status { height: 17px; flex: none; display: flex; justify-content: flex-end; align-items: flex-start; gap: 2px; padding: 1px 4px 0 0; color: #b9bdc2; overflow: hidden; }
.status button { width: 20px; height: 20px; }
.status .on { background: #4a80b4; }
.status .slim { width: 13px; margin-right: 6px; }
.status .scale { width: 26px; gap: 3px; font-size: 10px; }
.coords { line-height: 20px; white-space: nowrap; }

.suggest { position: absolute; left: 215px; top: 540px; width: 161px; margin: 0; padding: 5px 1px 0 4px; list-style: none; background: #3a465a; border: 1px solid #2a333e; color: #eceef0; font-weight: 500; font-size: 12px; }
.suggest li { display: flex; align-items: center; gap: 4px; height: 20px; padding-left: 24px; }
.suggest .on { padding-left: 4px; background: #1f262d; height: 18px; }
.chip { padding: 0 1px; background: #c8cacb; color: #2b3036; font-size: 9px; line-height: 10px; }
```
